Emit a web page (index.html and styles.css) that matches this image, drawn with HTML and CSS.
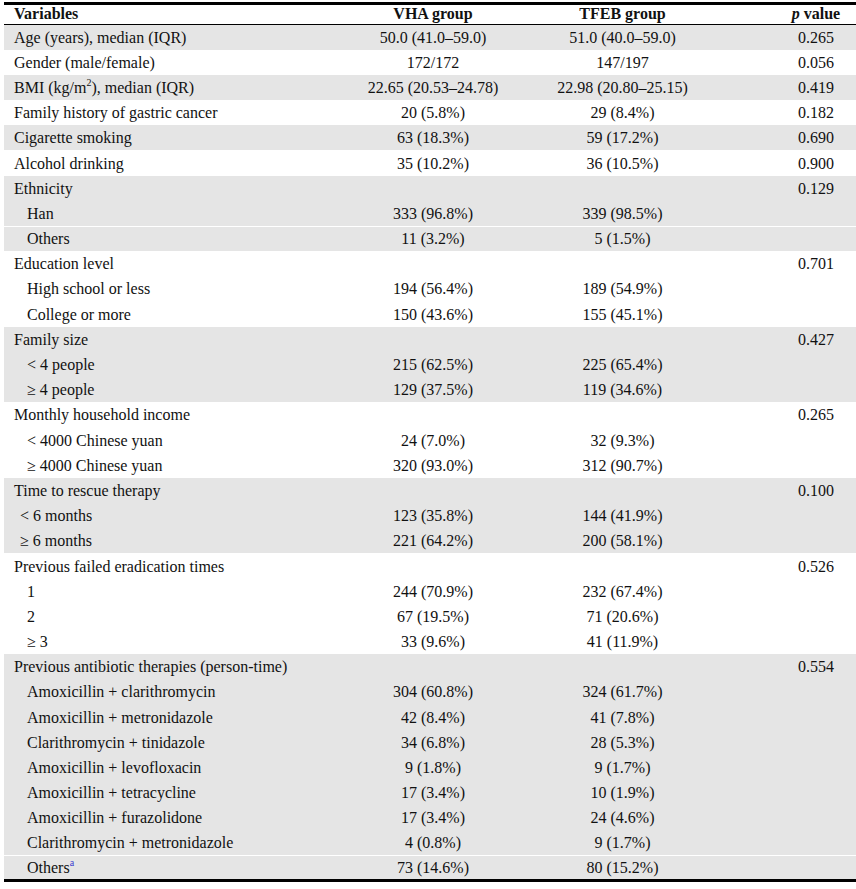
FILE: index.html
```html
<!DOCTYPE html>
<html lang="en">

<head>
  <meta charset="UTF-8" />
  <title>Baseline characteristics</title>
  <link rel="stylesheet" href="styles.css">
</head>

<body>
  <table class="tabla">
    <colgroup>
      <col class="c-var" />
      <col class="c-vha" />
      <col class="c-tfeb" />
      <col class="c-p" />
    </colgroup>
    <thead>
      <tr>
        <th class="izq">Variables</th>
        <th>VHA group</th>
        <th class="tfeb">TFEB group</th>
        <th class="pv"><i>p</i> value</th>
      </tr>
    </thead>
    <tbody>
      <tr class="gris"><td>Age (years), median (IQR)</td><td>50.0 (41.0–59.0)</td><td class="tfeb">51.0 (40.0–59.0)</td><td class="pv">0.265</td></tr>
      <tr><td>Gender (male/female)</td><td>172/172</td><td class="tfeb">147/197</td><td class="pv">0.056</td></tr>
      <tr class="gris"><td>BMI (kg/m<sup>2</sup>), median (IQR)</td><td>22.65 (20.53–24.78)</td><td class="tfeb">22.98 (20.80–25.15)</td><td class="pv">0.419</td></tr>
      <tr><td>Family history of gastric cancer</td><td>20 (5.8%)</td><td class="tfeb">29 (8.4%)</td><td class="pv">0.182</td></tr>
      <tr class="gris"><td>Cigarette smoking</td><td>63 (18.3%)</td><td class="tfeb">59 (17.2%)</td><td class="pv">0.690</td></tr>
      <tr><td>Alcohol drinking</td><td>35 (10.2%)</td><td class="tfeb">36 (10.5%)</td><td class="pv">0.900</td></tr>

      <tr class="gris"><td>Ethnicity</td><td></td><td class="tfeb"></td><td class="pv">0.129</td></tr>
      <tr class="gris"><td class="sub">Han</td><td>333 (96.8%)</td><td class="tfeb">339 (98.5%)</td><td class="pv"></td></tr>
      <tr class="gris corte"><td class="sub">Others</td><td>11 (3.2%)</td><td class="tfeb">5 (1.5%)</td><td class="pv"></td></tr>

      <tr><td>Education level</td><td></td><td class="tfeb"></td><td class="pv">0.701</td></tr>
      <tr><td class="sub">High school or less</td><td>194 (56.4%)</td><td class="tfeb">189 (54.9%)</td><td class="pv"></td></tr>
      <tr><td class="sub">College or more</td><td>150 (43.6%)</td><td class="tfeb">155 (45.1%)</td><td class="pv"></td></tr>

      <tr class="gris"><td>Family size</td><td></td><td class="tfeb"></td><td class="pv">0.427</td></tr>
      <tr class="gris"><td class="sub">&lt; 4 people</td><td>215 (62.5%)</td><td class="tfeb">225 (65.4%)</td><td class="pv"></td></tr>
      <tr class="gris"><td class="sub">≥ 4 people</td><td>129 (37.5%)</td><td class="tfeb">119 (34.6%)</td><td class="pv"></td></tr>

      <tr><td>Monthly household income</td><td></td><td class="tfeb"></td><td class="pv">0.265</td></tr>
      <tr><td class="sub">&lt; 4000 Chinese yuan</td><td>24 (7.0%)</td><td class="tfeb">32 (9.3%)</td><td class="pv"></td></tr>
      <tr><td class="sub">≥ 4000 Chinese yuan</td><td>320 (93.0%)</td><td class="tfeb">312 (90.7%)</td><td class="pv"></td></tr>

      <tr class="gris"><td>Time to rescue therapy</td><td></td><td class="tfeb"></td><td class="pv">0.100</td></tr>
      <tr class="gris"><td class="sub-corto">&lt; 6 months</td><td>123 (35.8%)</td><td class="tfeb">144 (41.9%)</td><td class="pv"></td></tr>
      <tr class="gris"><td class="sub-corto">≥ 6 months</td><td>221 (64.2%)</td><td class="tfeb">200 (58.1%)</td><td class="pv"></td></tr>

      <tr><td>Previous failed eradication times</td><td></td><td class="tfeb"></td><td class="pv">0.526</td></tr>
      <tr><td class="sub">1</td><td>244 (70.9%)</td><td class="tfeb">232 (67.4%)</td><td class="pv"></td></tr>
      <tr><td class="sub">2</td><td>67 (19.5%)</td><td class="tfeb">71 (20.6%)</td><td class="pv"></td></tr>
      <tr><td class="sub">≥ 3</td><td>33 (9.6%)</td><td class="tfeb">41 (11.9%)</td><td class="pv"></td></tr>

      <tr class="gris"><td>Previous antibiotic therapies (person-time)</td><td></td><td class="tfeb"></td><td class="pv">0.554</td></tr>
      <tr class="gris"><td class="sub">Amoxicillin + clarithromycin</td><td>304 (60.8%)</td><td class="tfeb">324 (61.7%)</td><td class="pv"></td></tr>
      <tr class="gris"><td class="sub">Amoxicillin + metronidazole</td><td>42 (8.4%)</td><td class="tfeb">41 (7.8%)</td><td class="pv"></td></tr>
      <tr class="gris"><td class="sub">Clarithromycin + tinidazole</td><td>34 (6.8%)</td><td class="tfeb">28 (5.3%)</td><td class="pv"></td></tr>
      <tr class="gris"><td class="sub">Amoxicillin + levofloxacin</td><td>9 (1.8%)</td><td class="tfeb">9 (1.7%)</td><td class="pv"></td></tr>
      <tr class="gris"><td class="sub">Amoxicillin + tetracycline</td><td>17 (3.4%)</td><td class="tfeb">10 (1.9%)</td><td class="pv"></td></tr>
      <tr class="gris"><td class="sub">Amoxicillin + furazolidone</td><td>17 (3.4%)</td><td class="tfeb">24 (4.6%)</td><td class="pv"></td></tr>
      <tr class="gris"><td class="sub">Clarithromycin + metronidazole</td><td>4 (0.8%)</td><td class="tfeb">9 (1.7%)</td><td class="pv"></td></tr>
      <tr class="gris corte"><td class="sub">Others<sup class="nota">a</sup></td><td>73 (14.6%)</td><td class="tfeb">80 (15.2%)</td><td class="pv"></td></tr>
    </tbody>
  </table>
</body>

</html>
```

FILE: styles.css
```css
:root {
  --gris: #e5e5e5;
  --texto: #111;
}

* {
  margin: 0;
  padding: 0;
  box-sizing: border-box;
}

body {
  background: white;
  font-family: "Liberation Serif", "Times New Roman", serif;
  font-size: 16px;
  color: var(--texto);
  padding-top: 2px;
}

.tabla {
  margin-left: 4px;
  width: 852px;
  border-collapse: collapse;
  table-layout: fixed;
  border-top: 3px solid black;
  border-bottom: 3px solid black;
}

.c-var {
  width: 331px;
}

.c-vha {
  width: 196px;
}

.c-tfeb {
  width: 245px;
}

.c-p {
  width: 80px;
}

th {
  font-weight: bold;
  text-align: center;
  height: 20px;
  padding-bottom: 1px;
  border-bottom: 1px solid black;
  white-space: nowrap;
}

th.izq {
  text-align: left;
  padding-left: 10px;
}

td {
  height: 25.2px;
  text-align: center;
  white-space: nowrap;
  vertical-align: middle;
  padding-top: 1px;
}

td:first-child {
  text-align: left;
  padding-left: 10px;
}

td.sub {
  padding-left: 23px;
}

td.sub-corto {
  padding-left: 16px;
}

.tfeb {
  padding-right: 62px;
}

.pv {
  padding-left: 0;
}

.gris td {
  background: var(--gris);
}

.corte td {
  border-top: 1px solid white;
}

sup {
  font-size: 10px;
  line-height: 0;
  vertical-align: 7px;
}

.nota {
  color: #3a3ad0;
}
```
